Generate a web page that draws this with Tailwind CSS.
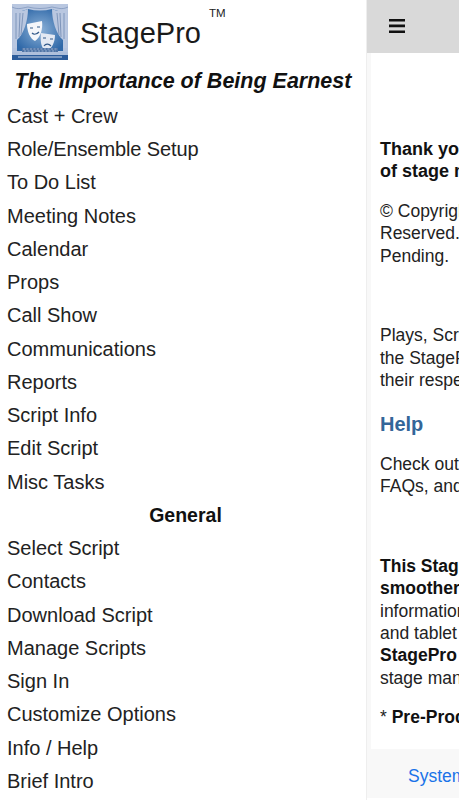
<!DOCTYPE html>
<html lang="en">
<head>
    <meta charset="UTF-8">
    <meta name="viewport" content="width=device-width, initial-scale=1.0">
    <title>StagePro</title>
    <script src="https://cdn.jsdelivr.net/npm/@tailwindcss/browser@4"></script>
</head>
<body class="bg-white text-[#111] font-['Liberation_Sans',Arial,sans-serif]">
<div class="flex h-[800px] w-[459px] overflow-hidden">

    <!-- sidebar -->
    <nav class="w-[367px] shrink-0 h-[800px] overflow-hidden border-r border-[#eeeeee]">
        <div class="flex h-[66px] pl-3 pt-1">
            <svg class="w-[56px] h-[56px] shrink-0" viewBox="0 0 56 56">
                <defs>
                    <radialGradient id="glow" cx="50%" cy="50%" r="60%">
                        <stop offset="0" stop-color="#8db2d8"/>
                        <stop offset="1" stop-color="#2f68a8"/>
                    </radialGradient>
                </defs>
                <rect width="56" height="56" fill="#b4c3de"/>
                <rect x="5" y="5" width="46" height="42" fill="url(#glow)"/>
                <path d="M0 0H56V6C50 9 46 7 40 5C32 7 24 7 16 5C10 7 6 9 0 6Z" fill="#b9c7e0"/>
                <path d="M1 6C7 8 12 7 16 5C16 16 12 30 5 36L5 44H1Z" fill="#b9c7e0"/>
                <path d="M55 6C49 8 44 7 40 5C40 16 44 30 51 36L51 44H55Z" fill="#b9c7e0"/>
                <path d="M0 3C6 6 10 4 16 3C24 5 32 5 40 3C46 4 50 6 56 3" stroke="#8097bc" stroke-width="0.8" fill="none"/>
                <path d="M4 9L4 35M8 9L7 33M11 9L9 31M52 9L52 35M48 9L49 33M45 9L47 31" stroke="#7f96bb" stroke-width="1" fill="none"/>
                <path d="M15 20L30 17C31 24 29 33 23 37C18 35 15 27 15 20Z" fill="#f4f6fa"/>
                <path d="M29 29L43 31C43 38 40 45 34 47C29 45 28 36 29 29Z" fill="#e3e9f3"/>
                <path d="M18 24L21 24M25 23L28 23M20 29C22 31 25 30 27 28" stroke="#335a8a" stroke-width="1.2" fill="none"/>
                <path d="M31 34L34 34M38 35L41 35M32 42C34 39 37 40 39 42" stroke="#335a8a" stroke-width="1.2" fill="none"/>
                <rect x="10" y="44" width="36" height="4" fill="#4f74a6"/>
                <path d="M11 45H45M12 47H44" stroke="#a9bedb" stroke-width="0.8" stroke-dasharray="2 1.5"/>
                <rect y="48" width="56" height="3" fill="#aebfdb"/>
                <rect y="51" width="56" height="5" fill="#2c5c9b"/>
                <rect x="6" y="52.5" width="44" height="1" fill="#c7d4e8"/>
            </svg>
            <div class="ml-3 mt-[12px] text-[29px] leading-[34px] text-[#1a1a1a]">StagePro</div>
            <div class="ml-2 text-[11.5px] leading-[16px] mt-[1px] text-[#222]">TM</div>
        </div>
        <h1 class="text-center text-[21.5px] leading-[30px] font-bold italic">The Importance of Being Earnest</h1>
        <ul class="text-[20px] leading-[33.25px] pl-[7px] text-[#222] mt-[3.8px]">
            <li>Cast + Crew</li>
            <li class="tracking-[-0.1px]">Role/Ensemble Setup</li>
            <li>To Do List</li>
            <li>Meeting Notes</li>
            <li>Calendar</li>
            <li>Props</li>
            <li>Call Show</li>
            <li>Communications</li>
            <li>Reports</li>
            <li>Script Info</li>
            <li>Edit Script</li>
            <li>Misc Tasks</li>
            <li class="text-center font-bold text-[19.5px] text-[#111] pr-[2px]">General</li>
            <li>Select Script</li>
            <li>Contacts</li>
            <li>Download Script</li>
            <li>Manage Scripts</li>
            <li>Sign In</li>
            <li>Customize Options</li>
            <li>Info / Help</li>
            <li>Brief Intro</li>
        </ul>
    </nav>

    <!-- main content, runs off the right edge -->
    <main class="w-[92px] shrink-0 h-[798px] overflow-hidden flex flex-col bg-[#f8f8f8]">
        <div class="h-[53px] shrink-0 bg-[#d9d9d9] flex items-center pl-[22px]">
            <svg class="w-4 h-[14px] mb-[1px]" viewBox="0 0 16 14"><path d="M0 0H16V2.6H0ZM0 5.6H16V8.2H0ZM0 11.4H16V14H0Z" fill="#111"/></svg>
        </div>
        <div class="h-[696px] shrink-0 bg-white ml-[4px] pl-[9px] whitespace-nowrap text-[17.5px] leading-[22.4px] text-[#222]">
            <p class="mt-[85px] text-[18px] font-bold text-[#111]">Thank you<br>of stage managers</p>
            <p class="mt-[17px]">© Copyright<br>Reserved.<br>Pending.</p>
            <p class="mt-[57.4px]">Plays, Scripts<br>the StagePro<br>their respective</p>
            <h2 class="mt-[20.4px] text-[20px] leading-[24px] font-bold text-[#336699]">Help</h2>
            <p class="mt-[17px]">Check out<br>FAQs, and</p>
            <p class="mt-[57px]"><b class="text-[#111]">This StagePro<br>smoother</b><br>information<br>and tablet<br><b class="text-[#111]">StagePro</b><br>stage manager</p>
            <p class="mt-[17px]">* <b class="text-[#111]">Pre-Production</b></p>
        </div>
        <div class="pl-[41px] pt-[16px] whitespace-nowrap text-[17.5px] leading-[22px] text-[#1a73e8]">System</div>
    </main>
</div>
</body>
</html>
